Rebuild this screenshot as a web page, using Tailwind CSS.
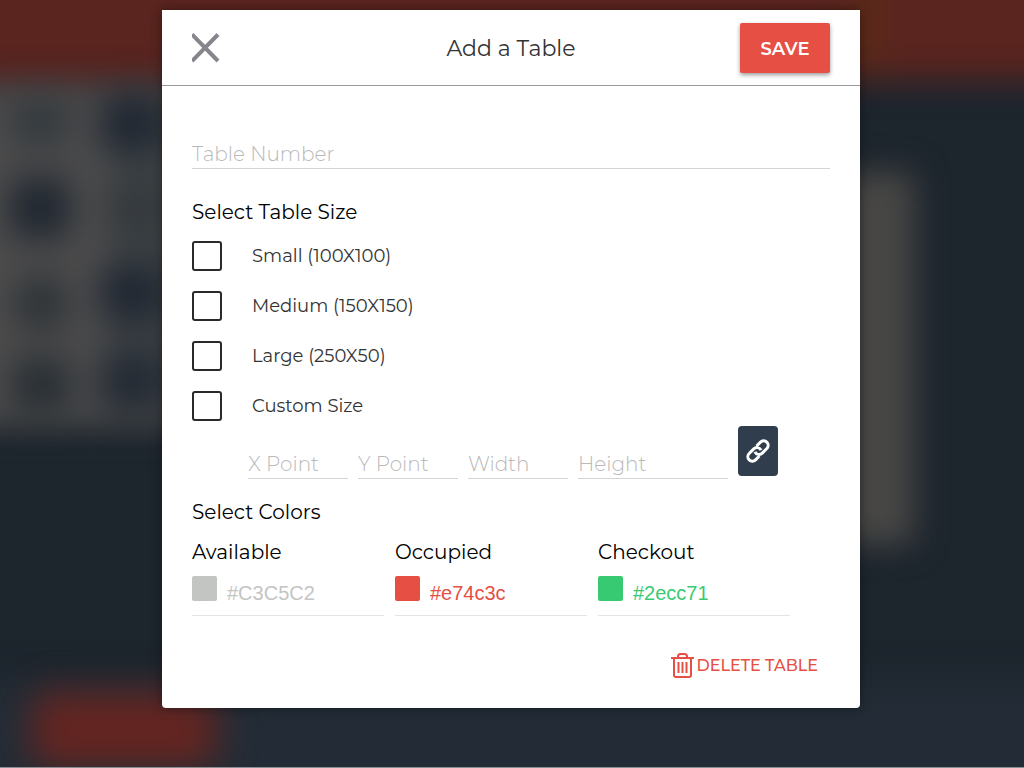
<!DOCTYPE html>
<html lang="en">
<head>
    <meta charset="UTF-8">
    <meta name="viewport" content="width=device-width, initial-scale=1.0">
    <title>Add a Table</title>
    <script src="https://cdn.jsdelivr.net/npm/@tailwindcss/browser@4"></script>
</head>
<body class="relative min-h-screen overflow-hidden bg-[#1e252e] font-[Montserrat,Inter,sans-serif] text-black">
    <!-- Blurred floor plan behind the dialog -->
    <svg class="absolute inset-0 w-full h-full" viewBox="0 0 1024 768" preserveAspectRatio="none" aria-hidden="true">
        <rect width="1024" height="768" fill="#1d252d"/>
        <g class="blur-[16px]">
            <rect x="-80" y="680" width="1200" height="200" fill="#232c36"/>
            <rect x="-80" y="-80" width="1200" height="160" fill="#5a241f"/>
            <rect x="850" y="-40" width="32" height="110" fill="#5a2a18"/>
            <rect x="-80" y="84" width="300" height="342" fill="#4e4d4d"/>
            <rect x="112" y="100" width="110" height="310" fill="#3f4447"/>
            <rect x="840" y="172" width="74" height="372" fill="#484745"/>
        </g>
        <g class="blur-[18px]">
            <rect x="10" y="98" width="60" height="46" fill="#31383d"/>
            <rect x="102" y="94" width="62" height="58" fill="#1f2631"/>
            <rect x="10" y="178" width="60" height="60" fill="#1d252f"/>
            <rect x="112" y="184" width="50" height="50" fill="#32373b"/>
            <rect x="16" y="278" width="50" height="50" fill="#2a3035"/>
            <rect x="102" y="264" width="62" height="58" fill="#1f2631"/>
            <rect x="12" y="358" width="58" height="54" fill="#252c32"/>
            <rect x="102" y="352" width="62" height="58" fill="#222933"/>
            <rect x="32" y="692" width="184" height="76" rx="16" fill="#642521"/>
        </g>
        <rect y="767" width="1024" height="1" fill="#8a8d91"/>
    </svg>

    <!-- Dialog -->
    <main class="relative pt-2.5 pr-0.5">
        <form class="mx-auto w-full max-w-[698px] rounded-b bg-white shadow-[0_0_12px_rgba(0,0,0,0.4)]">
            <header class="flex items-center justify-between h-[76px] px-[30px] border-b border-[#9a9a9c]">
                <button type="button" aria-label="Close" class="w-[90px] cursor-pointer">
                    <svg class="w-[30px] h-[30px]" viewBox="0 0 30 30" fill="none" stroke="#85858c" stroke-width="4">
                        <path d="M0 1.5 26 28M26 1.5 0 28"/>
                    </svg>
                </button>
                <h1 class="pt-0.5 text-[22px] leading-7 text-[#333333]">Add a Table</h1>
                <button type="submit" class="w-[90px] h-[50px] rounded-xs bg-[#e64f44] pt-0.5 text-lg font-semibold text-white shadow-[0_2px_4px_rgba(0,0,0,0.4)] cursor-pointer">SAVE</button>
            </header>

            <div class="px-[30px] pt-[52px] pb-[30px]">
                <input type="text" aria-label="Table Number" placeholder="Table Number" class="block w-full h-[31px] pt-0.5 border-b border-[#d4d4d4] text-xl font-light placeholder:text-[#b9b9b9] focus:outline-none">

                <!-- Table size -->
                <h2 class="mt-[31px] text-xl leading-6">Select Table Size</h2>
                <div class="mt-[17px] flex flex-col gap-5">
                    <label class="flex items-center gap-[30px] h-[30px] text-lg text-[#333333]">
                        <input type="checkbox" class="appearance-none w-[30px] h-[30px] rounded-[3px] border-2 border-[#2a2a2a] checked:bg-[#2c3e50]">
                        Small (100X100)
                    </label>
                    <label class="flex items-center gap-[30px] h-[30px] text-lg text-[#333333]">
                        <input type="checkbox" class="appearance-none w-[30px] h-[30px] rounded-[3px] border-2 border-[#2a2a2a] checked:bg-[#2c3e50]">
                        Medium (150X150)
                    </label>
                    <label class="flex items-center gap-[30px] h-[30px] text-lg text-[#333333]">
                        <input type="checkbox" class="appearance-none w-[30px] h-[30px] rounded-[3px] border-2 border-[#2a2a2a] checked:bg-[#2c3e50]">
                        Large (250X50)
                    </label>
                    <label class="flex items-center gap-[30px] h-[30px] text-lg text-[#333333]">
                        <input type="checkbox" class="appearance-none w-[30px] h-[30px] rounded-[3px] border-2 border-[#2a2a2a] checked:bg-[#2c3e50]">
                        Custom Size
                    </label>
                </div>

                <!-- Custom size -->
                <div class="mt-[5px] ml-14 flex items-end gap-2.5 h-[53px]">
                    <input type="text" aria-label="X Point" placeholder="X Point" class="w-[100px] min-w-0 h-[31px] pt-0.5 border-b border-[#d4d4d4] text-xl font-light placeholder:text-[#b9b9b9] focus:outline-none">
                    <input type="text" aria-label="Y Point" placeholder="Y Point" class="w-[100px] min-w-0 h-[31px] pt-0.5 border-b border-[#d4d4d4] text-xl font-light placeholder:text-[#b9b9b9] focus:outline-none">
                    <input type="text" aria-label="Width" placeholder="Width" class="w-[100px] min-w-0 h-[31px] pt-0.5 border-b border-[#d4d4d4] text-xl font-light placeholder:text-[#b9b9b9] focus:outline-none">
                    <input type="text" aria-label="Height" placeholder="Height" class="w-[150px] min-w-0 h-[31px] pt-0.5 border-b border-[#d4d4d4] text-xl font-light placeholder:text-[#b9b9b9] focus:outline-none">
                    <button type="button" aria-label="Link width and height" class="flex items-center justify-center self-start shrink-0 w-10 h-[50px] rounded bg-[#2f3d4d] cursor-pointer">
                        <svg class="w-6 h-6" viewBox="0 0 24 24" fill="none" stroke="#ffffff" stroke-width="3">
                            <g transform="rotate(-45 12 12)">
                                <path d="M14.5 7.5H20A4.5 4.5 0 0 1 20 16.5H13.5A4.5 4.5 0 0 1 9.3 10.4"/>
                                <path d="M9.5 16.5H4A4.5 4.5 0 0 1 4 7.5H10.5A4.5 4.5 0 0 1 14.7 13.6"/>
                            </g>
                        </svg>
                    </button>
                </div>

                <!-- Colors -->
                <h2 class="mt-[21px] text-xl leading-6">Select Colors</h2>
                <div class="mt-4 pr-10 grid grid-cols-3 gap-[11px]">
                    <div>
                        <label for="available" class="block text-xl leading-6">Available</label>
                        <div class="mt-3 flex gap-2.5 h-10 border-b border-[#e4e4e4]">
                            <input type="color" value="#c3c5c2" aria-label="Available swatch" class="appearance-none shrink-0 w-[25px] h-[25px] rounded-xs overflow-hidden bg-[#c3c5c2] [&::-webkit-color-swatch-wrapper]:p-0 [&::-webkit-color-swatch]:border-0">
                            <input type="text" id="available" value="#C3C5C2" class="w-full min-w-0 h-[34px] font-['Liberation_Sans',sans-serif] text-xl text-[#c3c5c2] focus:outline-none">
                        </div>
                    </div>
                    <div>
                        <label for="occupied" class="block text-xl leading-6">Occupied</label>
                        <div class="mt-3 flex gap-2.5 h-10 border-b border-[#e4e4e4]">
                            <input type="color" value="#e64f44" aria-label="Occupied swatch" class="appearance-none shrink-0 w-[25px] h-[25px] rounded-xs overflow-hidden bg-[#e64f44] [&::-webkit-color-swatch-wrapper]:p-0 [&::-webkit-color-swatch]:border-0">
                            <input type="text" id="occupied" value="#e74c3c" class="w-full min-w-0 h-[34px] font-['Liberation_Sans',sans-serif] text-xl text-[#e64f44] focus:outline-none">
                        </div>
                    </div>
                    <div>
                        <label for="checkout" class="block text-xl leading-6">Checkout</label>
                        <div class="mt-3 flex gap-2.5 h-10 border-b border-[#e4e4e4]">
                            <input type="color" value="#38ca73" aria-label="Checkout swatch" class="appearance-none shrink-0 w-[25px] h-[25px] rounded-xs overflow-hidden bg-[#38ca73] [&::-webkit-color-swatch-wrapper]:p-0 [&::-webkit-color-swatch]:border-0">
                            <input type="text" id="checkout" value="#2ecc71" class="w-full min-w-0 h-[34px] font-['Liberation_Sans',sans-serif] text-xl text-[#38ca73] focus:outline-none">
                        </div>
                    </div>
                </div>

                <div class="mt-[37px] pr-3 flex justify-end">
                    <button type="button" class="flex items-center gap-[3px] h-[25px] text-base font-medium text-[#e64f44] cursor-pointer">
                        <svg class="w-[23px] h-[25px]" viewBox="0 0 23 25" fill="none" stroke="currentColor" stroke-width="2">
                            <path d="M0 5H23"/>
                            <path d="M7 5V3.5Q7 1 9.5 1H13.5Q16 1 16 3.5V5"/>
                            <path d="M3 5V22Q3 24 5 24H18Q20 24 20 22V5"/>
                            <path d="M7.5 9V20M11.5 9V20M15.5 9V20"/>
                        </svg>
                        DELETE TABLE
                    </button>
                </div>
            </div>
        </form>
    </main>
</body>
</html>
